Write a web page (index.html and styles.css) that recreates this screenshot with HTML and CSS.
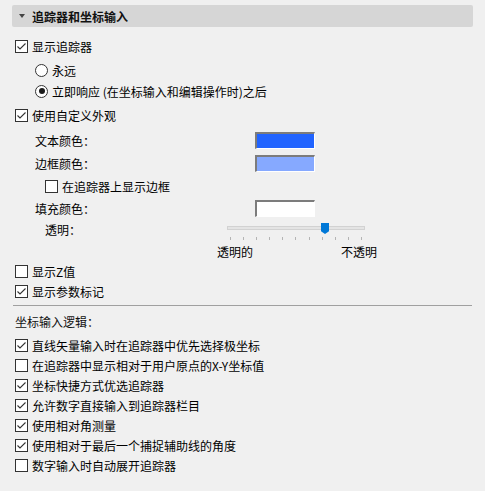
FILE: index.html
```html
<!DOCTYPE html>
<html>
<head>
    <meta charset="UTF-8">
    <title>追踪器和坐标输入</title>
    <link rel="stylesheet" href="styles.css">
</head>
<body>
    <div class="section-head"><span class="caret"></span>追踪器和坐标输入</div>

    <div class="row check gap-9"><span class="box on"><svg viewBox="0 0 11 11"><path d="M1.5 5.5 L4 8 L9.5 2.5"/></svg></span>显示追踪器</div>
    <div class="row radio gap-4"><span class="dot"></span>永远</div>
    <div class="row radio gap-1"><span class="dot on"></span>立即响应 (在坐标输入和编辑操作时)之后</div>
    <div class="row check gap-4"><span class="box on"><svg viewBox="0 0 11 11"><path d="M1.5 5.5 L4 8 L9.5 2.5"/></svg></span>使用自定义外观</div>

    <div class="row color gap-5"><span class="color-label">文本颜色：</span><span class="swatch" style="background:#2164ff"></span></div>
    <div class="row color gap-3"><span class="color-label">边框颜色：</span><span class="swatch" style="background:#86a9ff"></span></div>
    <div class="row check sub gap-3"><span class="box"></span>在追踪器上显示边框</div>
    <div class="row color gap-2"><span class="color-label">填充颜色：</span><span class="swatch" style="background:#ffffff"></span></div>

    <div class="row opacity gap-1">
        <span class="opacity-label">透明：</span>
        <div class="slider">
            <div class="track"></div>
            <div class="thumb"></div>
            <div class="ticks">
                <i></i><i></i><i></i><i></i><i></i><i></i><i></i><i></i><i></i><i></i><i></i>
            </div>
        </div>
    </div>
    <div class="slider-labels gap-5"><span>透明的</span><span>不透明</span></div>

    <div class="row check gap-1"><span class="box"></span>显示Z值</div>
    <div class="row check"><span class="box on"><svg viewBox="0 0 11 11"><path d="M1.5 5.5 L4 8 L9.5 2.5"/></svg></span>显示参数标记</div>

    <div class="separator"></div>

    <div class="row caption gap-5">坐标输入逻辑：</div>

    <div class="row check gap-4"><span class="box on"><svg viewBox="0 0 11 11"><path d="M1.5 5.5 L4 8 L9.5 2.5"/></svg></span>直线矢量输入时在追踪器中优先选择极坐标</div>
    <div class="row check"><span class="box"></span>在追踪器中显示相对于用户原点的X-Y坐标值</div>
    <div class="row check"><span class="box on"><svg viewBox="0 0 11 11"><path d="M1.5 5.5 L4 8 L9.5 2.5"/></svg></span>坐标快捷方式优选追踪器</div>
    <div class="row check"><span class="box on"><svg viewBox="0 0 11 11"><path d="M1.5 5.5 L4 8 L9.5 2.5"/></svg></span>允许数字直接输入到追踪器栏目</div>
    <div class="row check"><span class="box on"><svg viewBox="0 0 11 11"><path d="M1.5 5.5 L4 8 L9.5 2.5"/></svg></span>使用相对角测量</div>
    <div class="row check"><span class="box on"><svg viewBox="0 0 11 11"><path d="M1.5 5.5 L4 8 L9.5 2.5"/></svg></span>使用相对于最后一个捕捉辅助线的角度</div>
    <div class="row check"><span class="box"></span>数字输入时自动展开追踪器</div>
</body>
</html>
```

FILE: styles.css
```css
body {
    margin: 0;
    background: #f0f0f0;
    font-family: "Noto Sans CJK SC", "Noto Sans", sans-serif;
    font-size: 12px;
    color: #000;
}

.section-head {
    display: flex;
    align-items: center;
    height: 22px;
    margin: 5px 12px 0 12px;
    padding-left: 7px;
    background: #d6d6d6;
    border-radius: 2px;
    font-size: 12px;
    font-weight: bold;
    color: #111;
}

.caret {
    width: 0;
    height: 0;
    border-left: 3px solid transparent;
    border-right: 3px solid transparent;
    border-top: 4px solid #444;
    margin-right: 7px;
}

.row {
    display: flex;
    align-items: center;
    height: 20px;
    padding-left: 15px;
    white-space: nowrap;
}

.gap-1 { margin-top: 1px; }
.gap-2 { margin-top: 2px; }
.gap-3 { margin-top: 3px; }
.gap-4 { margin-top: 4px; }
.gap-5 { margin-top: 5px; }
.gap-9 { margin-top: 9px; }

/* checkboxes */
.box {
    box-sizing: border-box;
    width: 13px;
    height: 13px;
    border: 1px solid #333;
    background: #fff;
    margin-right: 4px;
    flex-shrink: 0;
}

.box svg {
    display: block;
    width: 11px;
    height: 11px;
}

.box svg path {
    fill: none;
    stroke: #333;
    stroke-width: 1.1;
}

.check.sub {
    padding-left: 45px;
}

/* radios */
.radio {
    padding-left: 35px;
}

.dot {
    box-sizing: border-box;
    width: 13px;
    height: 13px;
    border: 1px solid #333;
    border-radius: 50%;
    background: #fff;
    margin-right: 4px;
    display: flex;
    align-items: center;
    justify-content: center;
}

.dot.on::after {
    content: "";
    width: 6px;
    height: 6px;
    border-radius: 50%;
    background: #1a1a1a;
}

/* colour fields */
.color {
    padding-left: 35px;
}

.color-label {
    width: 220px;
}

.swatch {
    box-sizing: border-box;
    width: 60px;
    height: 17px;
    border-top: 2px solid #7c7c7c;
    border-left: 2px solid #7c7c7c;
    border-bottom: 1px solid #fff;
    border-right: 1px solid #fff;
}

/* opacity slider */
.opacity {
    padding-left: 45px;
}

.opacity-label {
    width: 182px;
}

.slider {
    position: relative;
    width: 138px;
    height: 20px;
}

.track {
    position: absolute;
    top: 7px;
    left: 0;
    right: 0;
    height: 4px;
    box-sizing: border-box;
    background: #e4e4e4;
    border: 1px solid #d2d2d2;
}

.thumb {
    position: absolute;
    top: 4px;
    left: 94px;
    width: 8px;
    height: 11px;
    background: #0078d7;
    clip-path: polygon(0 0, 100% 0, 100% 75%, 50% 100%, 0 75%);
}

.ticks {
    position: absolute;
    top: 18px;
    left: 3px;
    right: 3px;
    height: 3px;
    display: flex;
    justify-content: space-between;
}

.ticks i {
    width: 1px;
    height: 3px;
    background: #b4b4b4;
}

.slider-labels {
    display: flex;
    justify-content: space-between;
    width: 160px;
    height: 16px;
    line-height: 16px;
    margin-left: 217px;
}

.separator {
    height: 1px;
    margin: 4px 13px 0 13px;
    background: #a0a0a0;
}

.caption {
    color: #111;
}
```
